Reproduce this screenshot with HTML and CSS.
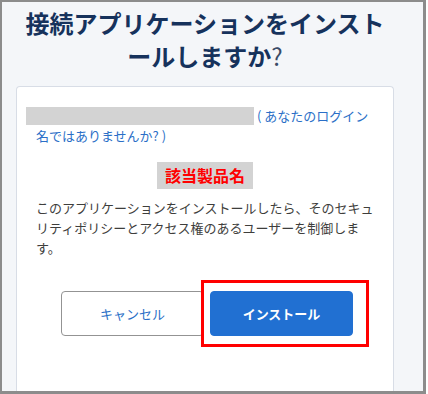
FILE: index.html
```html
<!DOCTYPE html>
<html lang="ja">
<head>
  <meta charset="UTF-8" />
  <title>接続アプリケーションのインストール</title>
  <link rel="stylesheet" href="styles.css">
</head>
<body>

  <div class="frame">
    <h1 class="title">接続アプリケーションをインストールしますか<span class="qmark">?</span></h1>

    <div class="card">
      <p class="login">
        <span class="redacted"></span> <a href="#">( あなたのログイン名ではありませんか? )</a>
      </p>

      <div class="product-wrap">
        <span class="product">該当製品名</span>
      </div>

      <p class="desc">このアプリケーションをインストールしたら、そのセキュリティポリシーとアクセス権のあるユーザーを制御します。</p>

      <div class="actions">
        <button class="btn btn-cancel">キャンセル</button>
        <button class="btn btn-install">インストール<span class="highlight"></span></button>
      </div>
    </div>
  </div>

</body>
</html>
```

FILE: styles.css
```css
body {
  margin: 0;
  background: #fff;
  font-family: "Noto Sans CJK JP", "Noto Sans", sans-serif;
}

.frame {
  width: 426px;
  height: 394px;
  box-sizing: border-box;
  border: 2px solid #8c8c8c;
  border-right-width: 3px;
  border-bottom-width: 3px;
  background: #f4f6f9;
  padding: 0 29px 0 14px;
  display: flex;
  flex-direction: column;
  overflow: hidden;
}

.title {
  margin: 4px 0 14px;
  font-size: 24px;
  line-height: 33px;
  font-weight: bold;
  text-align: center;
  color: #16325c;
  line-break: loose;
}

.qmark {
  font-weight: normal;
  color: #3a4b66;
}

/* card */
.card {
  flex: 1;
  background: #fff;
  border: 1px solid #d8dde6;
  border-bottom: none;
  border-radius: 4px 4px 0 0;
  padding: 19px 19px 0;
}

.login {
  margin: 0;
  font-size: 13px;
  line-height: 20px;
}

.login a {
  color: #2b6fc7;
  text-decoration: none;
}

.redacted {
  display: inline-block;
  width: 228px;
  height: 18px;
  margin-left: -10px;
  vertical-align: -4px;
  background: #d3d3d3;
}

.product-wrap {
  margin-top: 16px;
  text-align: center;
}

.product {
  display: inline-block;
  padding: 2px 8px;
  background: #d3d3d3;
  color: #f00;
  font-size: 16px;
  line-height: 23px;
  font-weight: bold;
}

.desc {
  margin: 9px 0 0;
  font-size: 13px;
  line-height: 20px;
  color: #3e3e3c;
}

/* buttons */
.actions {
  display: flex;
  justify-content: center;
  gap: 6px;
  margin-top: 33px;
  padding-left: 4px;
}

.btn {
  width: 143px;
  height: 45px;
  border-radius: 4px;
  font-family: inherit;
  font-size: 13px;
  cursor: pointer;
}

.btn-cancel {
  background: #fff;
  border: 1px solid #939393;
  color: #2b6fc7;
}

.btn-install {
  position: relative;
  background: #2170d2;
  border: 1px solid #2170d2;
  color: #fff;
  font-weight: bold;
}

.highlight {
  position: absolute;
  top: -12px;
  left: -10px;
  right: -17px;
  bottom: -12px;
  border: 3px solid #f00;
}
```
